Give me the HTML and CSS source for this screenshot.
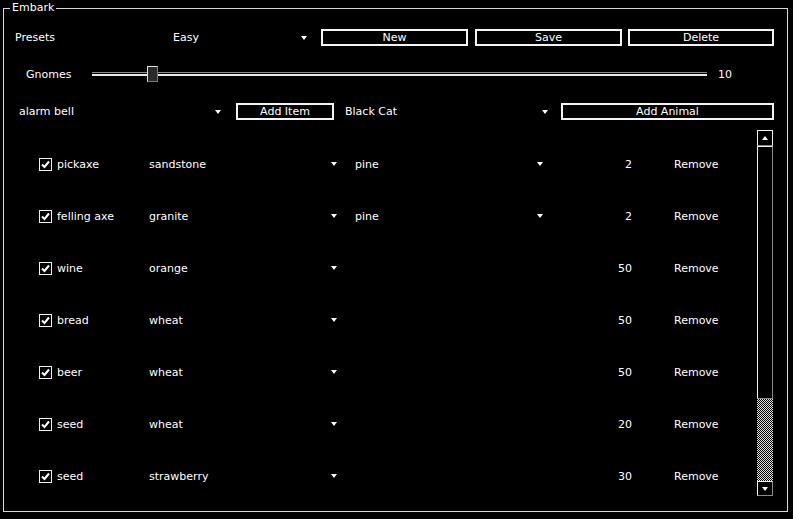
FILE: index.html
```html
<!DOCTYPE html>
<html lang="en">
<head>
    <meta charset="UTF-8">
    <title>Embark</title>
    <link rel="stylesheet" href="styles.css">
</head>
<body>
    <div class="marco">
        <div class="leyenda">Embark</div>

        <div class="fila fila-presets">
            <div class="etiqueta-presets">Presets</div>
            <div class="combo combo-presets">Easy<span class="flecha"></span></div>
            <div class="boton boton-new">New</div>
            <div class="boton boton-save">Save</div>
            <div class="boton boton-delete">Delete</div>
        </div>

        <div class="fila fila-gnomos">
            <div class="etiqueta-gnomos">Gnomes</div>
            <div class="deslizador">
                <div class="pista"></div>
                <div class="pulgar"></div>
            </div>
            <div class="valor">10</div>
        </div>

        <div class="fila fila-agregar">
            <div class="combo combo-item">alarm bell<span class="flecha"></span></div>
            <div class="boton boton-item">Add Item</div>
            <div class="combo combo-animal">Black Cat<span class="flecha"></span></div>
            <div class="boton boton-animal">Add Animal</div>
        </div>

        <div class="lista">
            <div class="filas">
                <div class="item">
                    <span class="casilla"><svg width="11" height="11" viewBox="0 0 11 11"><path d="M2 5.5 L4.5 8 L9 2.5" fill="none" stroke="#fff" stroke-width="2"/></svg></span>
                    <span class="nombre">pickaxe</span>
                    <div class="combo combo-material">sandstone<span class="flecha"></span></div>
                    <div class="combo combo-madera">pine<span class="flecha"></span></div>
                    <span class="cantidad">2</span>
                    <span class="quitar">Remove</span>
                </div>
                <div class="item">
                    <span class="casilla"><svg width="11" height="11" viewBox="0 0 11 11"><path d="M2 5.5 L4.5 8 L9 2.5" fill="none" stroke="#fff" stroke-width="2"/></svg></span>
                    <span class="nombre">felling axe</span>
                    <div class="combo combo-material">granite<span class="flecha"></span></div>
                    <div class="combo combo-madera">pine<span class="flecha"></span></div>
                    <span class="cantidad">2</span>
                    <span class="quitar">Remove</span>
                </div>
                <div class="item">
                    <span class="casilla"><svg width="11" height="11" viewBox="0 0 11 11"><path d="M2 5.5 L4.5 8 L9 2.5" fill="none" stroke="#fff" stroke-width="2"/></svg></span>
                    <span class="nombre">wine</span>
                    <div class="combo combo-material">orange<span class="flecha"></span></div>
                    <div class="vacio"></div>
                    <span class="cantidad">50</span>
                    <span class="quitar">Remove</span>
                </div>
                <div class="item">
                    <span class="casilla"><svg width="11" height="11" viewBox="0 0 11 11"><path d="M2 5.5 L4.5 8 L9 2.5" fill="none" stroke="#fff" stroke-width="2"/></svg></span>
                    <span class="nombre">bread</span>
                    <div class="combo combo-material">wheat<span class="flecha"></span></div>
                    <div class="vacio"></div>
                    <span class="cantidad">50</span>
                    <span class="quitar">Remove</span>
                </div>
                <div class="item">
                    <span class="casilla"><svg width="11" height="11" viewBox="0 0 11 11"><path d="M2 5.5 L4.5 8 L9 2.5" fill="none" stroke="#fff" stroke-width="2"/></svg></span>
                    <span class="nombre">beer</span>
                    <div class="combo combo-material">wheat<span class="flecha"></span></div>
                    <div class="vacio"></div>
                    <span class="cantidad">50</span>
                    <span class="quitar">Remove</span>
                </div>
                <div class="item">
                    <span class="casilla"><svg width="11" height="11" viewBox="0 0 11 11"><path d="M2 5.5 L4.5 8 L9 2.5" fill="none" stroke="#fff" stroke-width="2"/></svg></span>
                    <span class="nombre">seed</span>
                    <div class="combo combo-material">wheat<span class="flecha"></span></div>
                    <div class="vacio"></div>
                    <span class="cantidad">20</span>
                    <span class="quitar">Remove</span>
                </div>
                <div class="item">
                    <span class="casilla"><svg width="11" height="11" viewBox="0 0 11 11"><path d="M2 5.5 L4.5 8 L9 2.5" fill="none" stroke="#fff" stroke-width="2"/></svg></span>
                    <span class="nombre">seed</span>
                    <div class="combo combo-material">strawberry<span class="flecha"></span></div>
                    <div class="vacio"></div>
                    <span class="cantidad">30</span>
                    <span class="quitar">Remove</span>
                </div>
            </div>

            <div class="barra">
                <div class="barra-boton"><span class="flecha flecha-arriba"></span></div>
                <div class="barra-pulgar"></div>
                <div class="barra-pista"></div>
                <div class="barra-boton barra-abajo"><span class="flecha"></span></div>
            </div>
        </div>
    </div>
</body>
</html>
```

FILE: styles.css
```css
body {
    margin: 0;
    padding: 0;
    background-color: #000;
    color: #fff;
    font-family: "DejaVu Sans", Verdana, sans-serif;
    font-size: 11px;
    line-height: 13px;
}

.marco {
    position: relative;
    margin: 8px 0 0 3px;
    width: 785px;
    height: 504px;
    border: 1px solid #d8d8d8;
    box-sizing: border-box;
    padding-top: 20px;
}

.leyenda {
    position: absolute;
    top: -8px;
    left: 6px;
    padding: 0 2px;
    background-color: #000;
}

.fila {
    display: flex;
    align-items: center;
}

/* fila de presets */
.fila-presets {
    height: 17px;
    padding-left: 11px;
}

.etiqueta-presets {
    width: 158px;
}

.combo {
    display: flex;
    align-items: center;
    justify-content: space-between;
    padding-right: 7px;
    box-sizing: border-box;
}

.flecha {
    width: 0;
    height: 0;
    border-style: solid;
    border-width: 4px 3.5px 0;
    border-color: #fff transparent transparent;
}

.flecha-arriba {
    border-width: 0 3.5px 4px;
    border-color: transparent transparent #fff;
}

.combo-presets {
    width: 141px;
}

.boton {
    height: 17px;
    border: 2px solid #f4f4f4;
    box-sizing: border-box;
    display: flex;
    align-items: center;
    justify-content: center;
}

.boton-new {
    width: 147px;
    margin-left: 7px;
}

.boton-save {
    width: 147px;
    margin-left: 7px;
}

.boton-delete {
    width: 146px;
    margin-left: 6px;
}

/* gnomos */
.fila-gnomos {
    height: 16px;
    margin-top: 20px;
    padding-left: 22px;
}

.etiqueta-gnomos {
    width: 66px;
}

.deslizador {
    position: relative;
    width: 615px;
    height: 16px;
    display: flex;
    align-items: center;
}

.pista {
    width: 100%;
    height: 4px;
    border-top: 1px solid #8a8a8a;
    border-bottom: 2px solid #e8e8e8;
    box-sizing: border-box;
}

.pulgar {
    position: absolute;
    top: 0;
    left: 55px;
    width: 11px;
    height: 16px;
    box-sizing: border-box;
    border: 1px solid #e0e0e0;
    border-right-color: #777;
    border-bottom-color: #777;
    background-color: #2a2a2a;
}

.valor {
    margin-left: 11px;
}

/* agregar */
.fila-agregar {
    height: 17px;
    margin-top: 21px;
    padding-left: 15px;
}

.combo-item {
    width: 209px;
}

.boton-item {
    width: 98px;
    margin-left: 8px;
}

.combo-animal {
    width: 210px;
    margin-left: 11px;
}

.boton-animal {
    width: 213px;
    margin-left: 6px;
}

/* lista */
.lista {
    display: flex;
    height: 366px;
    margin-top: 10px;
}

.filas {
    width: 753px;
    padding-top: 8px;
    overflow: hidden;
}

.item {
    display: flex;
    align-items: center;
    height: 52px;
    padding-left: 35px;
}

.casilla {
    width: 13px;
    height: 13px;
    box-sizing: border-box;
    border: 1px solid #f0f0f0;
    display: flex;
    align-items: center;
    justify-content: center;
}

.nombre {
    width: 92px;
    margin-left: 5px;
}

.combo-material {
    width: 195px;
}

.combo-madera {
    width: 195px;
    margin-left: 11px;
}

.vacio {
    width: 195px;
    margin-left: 11px;
}

.cantidad {
    width: 82px;
    text-align: right;
}

.quitar {
    margin-left: 42px;
}

/* barra de desplazamiento */
.barra {
    width: 16px;
    display: flex;
    flex-direction: column;
}

.barra-boton {
    height: 16px;
    box-sizing: border-box;
    border: 1px solid #f0f0f0;
    border-bottom-color: #8a8a8a;
    display: flex;
    align-items: center;
    justify-content: center;
}

.barra-abajo {
    height: 15px;
    border-right-color: #8a8a8a;
}

.barra-pulgar {
    height: 253px;
    box-sizing: border-box;
    border: 1px solid #f0f0f0;
    border-right-color: #8a8a8a;
    border-bottom-color: #8a8a8a;
}

.barra-pista {
    height: 82px;
    background: repeating-conic-gradient(#e0e0e0 0 25%, #000 0 50%) 0 0 / 2px 2px;
}
```
